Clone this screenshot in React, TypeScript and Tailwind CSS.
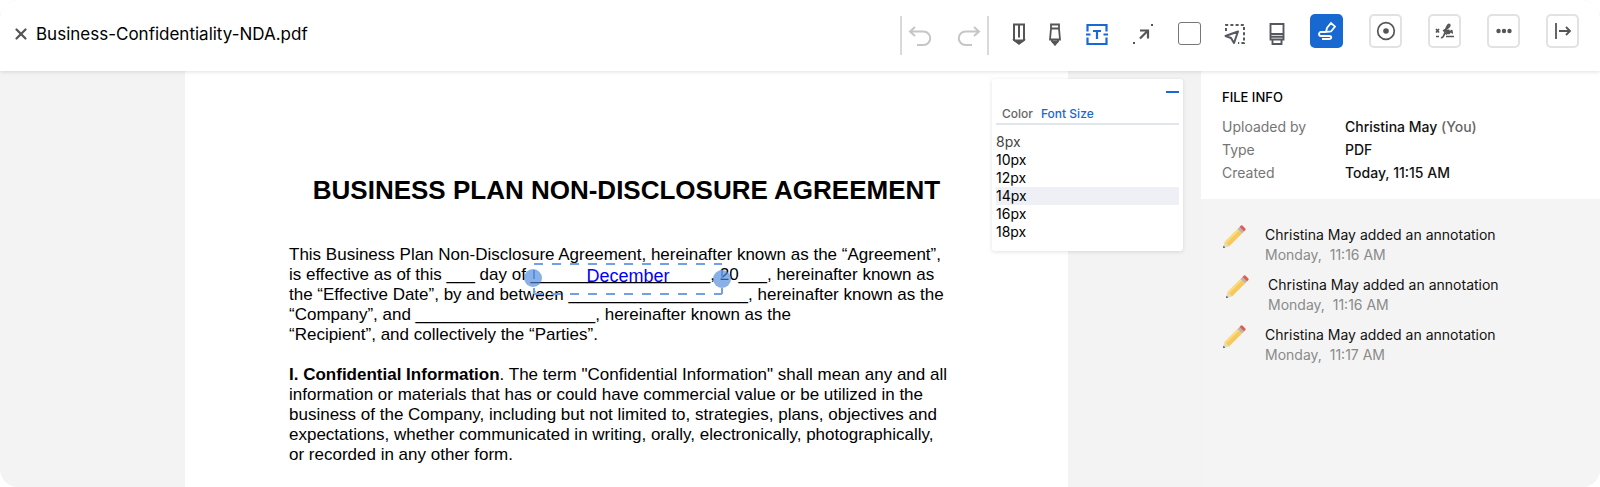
import { X } from 'lucide-react'
import type { ReactNode } from 'react'

const fontSizes = [8, 10, 12, 14, 16, 18]

const annotations = [
  { author: 'Christina May', time: '11:16 AM', indent: false },
  { author: 'Christina May', time: '11:16 AM', indent: true },
  { author: 'Christina May', time: '11:17 AM', indent: false },
]

function ToolButton({ label, children }: { label: string; children: ReactNode }) {
  return (
    <button aria-label={label} className="flex h-6 w-6 items-center justify-center">
      {children}
    </button>
  )
}

function FrameButton({
  label,
  active,
  children,
}: {
  label: string
  active?: boolean
  children: ReactNode
}) {
  return (
    <button
      aria-label={label}
      className={`flex h-[34px] w-[33px] items-center justify-center rounded-[5px] ${active ? 'bg-[#1868d1] text-white' : 'border-2 border-[#e2e2e2] text-[#555555]'}`}
    >
      {children}
    </button>
  )
}

function UndoIcon() {
  return (
    <svg width="24" height="24" viewBox="0 0 24 24" fill="none" stroke="#c6c6c6" strokeWidth="2">
      <path d="M7 3 2 7.500l5 4.500M2 7.500h13.500a6.500 6.500 0 0 1 0 13.500H9" />
    </svg>
  )
}

function RedoIcon() {
  return (
    <svg width="24" height="24" viewBox="0 0 24 24" fill="none" stroke="#c6c6c6" strokeWidth="2">
      <path d="m17 3 5 4.500-5 4.500M22 7.500H8.500a6.500 6.500 0 0 0 0 13.500H15" />
    </svg>
  )
}

function PenIcon() {
  return (
    <svg width="14" height="22" viewBox="0 0 14 22" fill="none" stroke="#555" strokeWidth="2">
      <path d="M2 1.500h10v15.500l-5 3.500-5-3.500zM7 1.500v13" />
      <path d="m3 17.500 4 3 4-3z" fill="#555" />
    </svg>
  )
}

function HighlighterIcon() {
  return (
    <svg width="14" height="24" viewBox="0 0 14 24" fill="none" stroke="#555" strokeWidth="1.800">
      <path d="M3 2.500h8v4H3zM3 6.500 2 17.500h10L11 6.500M4 17.500v2l3 3 3-3v-2" />
      <path d="m5 19.500 2 3 2-3z" fill="#555" />
    </svg>
  )
}

function TextIcon() {
  return (
    <svg width="24" height="24" viewBox="0 0 24 24" fill="none" stroke="#1868d8" strokeWidth="2.200">
      <path d="M2.500 9.500V3h19v6.500M2.500 15.500V22h19v-6.500M1 12.500h4.500M18.500 12.500H23M8 9h8M12 9v8" />
    </svg>
  )
}

function ArrowIcon() {
  return (
    <svg width="22" height="22" viewBox="0 0 22 22" fill="none" stroke="#555" strokeWidth="2.200">
      <path d="M8 7.500h8v8M16 7.500l-8 8" />
      <path d="M1 20h2M19 2h2" strokeWidth="2" />
    </svg>
  )
}

function SelectIcon() {
  return (
    <svg width="22" height="22" viewBox="0 0 22 22" fill="none" stroke="#55585f" strokeWidth="2">
      <path d="M2 8V2h18v18h-6" strokeDasharray="3 2.200" />
      <path d="M14 8.500 1.500 13l5.500 2 3 5z" strokeLinejoin="round" />
    </svg>
  )
}

function EraserIcon() {
  return (
    <svg width="16" height="24" viewBox="0 0 16 24" fill="none" stroke="#55585f" strokeWidth="1.900">
      <path d="M1.500 2h13v15.500h-13zM1.500 12h13M1.500 14.800h13M3.500 17.500h9v4.500h-9z" />
    </svg>
  )
}

function SignIcon() {
  return (
    <svg width="20" height="20" viewBox="0 0 20 20" fill="none" stroke="currentColor" strokeWidth="1.800">
      <path d="m9 11 1-4 4-5 4 3.500-4 5zM10 11H4a2 2 0 0 0 0 4h8c3 0 3 3 0 3H5" />
    </svg>
  )
}

function TargetIcon() {
  return (
    <svg width="20" height="20" viewBox="0 0 20 20" fill="none" stroke="currentColor" strokeWidth="1.700">
      <circle cx="10" cy="10" r="8.300" />
      <circle cx="10" cy="10" r="2.800" fill="currentColor" stroke="none" />
    </svg>
  )
}

function SignatureIcon() {
  return (
    <svg width="20" height="18" viewBox="0 0 20 18" fill="none" stroke="currentColor" strokeWidth="1.700">
      <path d="m1 7 3 3.500M4 7l-3 3.500M1 14.500h3M11 14.500h8" />
      <path d="M6 15.500c2 1 3.500-3 4.500-7s3-7 4-6-1 4-6.500 6.500M9 9.500l4-1-2 4 3.500-4-1 3.500 3-3.500c1 0-.5 2.500 1.500 2.500" />
    </svg>
  )
}

function MoreIcon() {
  return (
    <svg width="16" height="6" viewBox="0 0 16 6" fill="currentColor">
      <circle cx="2.500" cy="3" r="2.200" />
      <circle cx="8" cy="3" r="2.200" />
      <circle cx="13.500" cy="3" r="2.200" />
    </svg>
  )
}

function CollapseIcon() {
  return (
    <svg width="18" height="18" viewBox="0 0 18 18" fill="none" stroke="currentColor" strokeWidth="1.800">
      <path d="M2 1v16M5 9h11M12 5l4 4-4 4" />
    </svg>
  )
}

function PencilIcon() {
  return (
    <svg width="24" height="24" viewBox="0 0 24 24">
      <path d="m1 23 1.500-6 4.500 4.500z" fill="#e3dcbc" />
      <path d="m1 23 .6-2.300 1.700 1.700z" fill="#4a4a4a" />
      <path d="M2.500 17 15.500 4l4.500 4.500L7 21.500z" fill="#f7c95c" />
      <path d="m2.500 17 13-13 1.500 1.500-13 13z" fill="#fbdc85" />
      <path d="m15.500 4 2-2L22 6.500l-2 2z" fill="#b9b6b2" />
      <path d="M17.500 2 19 .6q.7-.5 1.400 0l3 3q.6.700 0 1.400L22 6.500z" fill="#de5f50" />
    </svg>
  )
}

function Header() {
  return (
    <header className="relative z-10 flex h-[71px] shrink-0 items-center justify-between bg-white pr-[21px] pb-1 pl-3 shadow-[0_1px_4px_rgba(0,0,0,0.12)]">
      <div className="flex items-center gap-1.5">
        <button aria-label="Close" className="text-[#555555]">
          <X size={18} strokeWidth={3} />
        </button>
        <h1 className="text-[17px] leading-6 text-black">Business-Confidentiality-NDA.pdf</h1>
      </div>
      <div className="flex items-center">
        <div className="mt-1 flex h-[39px] w-[89px] items-center justify-between border-x-2 border-[#d9d9d9] px-1.5">
          <ToolButton label="Undo">
            <UndoIcon />
          </ToolButton>
          <ToolButton label="Redo">
            <RedoIcon />
          </ToolButton>
        </div>
        <div className="mr-[21px] ml-[18px] flex items-center gap-[18px]">
          <div className="flex items-center gap-3">
            <ToolButton label="Pen">
              <PenIcon />
            </ToolButton>
            <ToolButton label="Highlighter">
              <HighlighterIcon />
            </ToolButton>
          </div>
          <div className="flex items-center gap-[22px]">
            <ToolButton label="Text">
              <TextIcon />
            </ToolButton>
            <ToolButton label="Arrow">
              <ArrowIcon />
            </ToolButton>
            <ToolButton label="Rectangle">
              <span className="h-[23px] w-[23px] rounded-[3px] border border-[#777777]" />
            </ToolButton>
            <ToolButton label="Select">
              <SelectIcon />
            </ToolButton>
          </div>
          <ToolButton label="Eraser">
            <EraserIcon />
          </ToolButton>
        </div>
        <div className="mb-1.5 flex items-center gap-[26px]">
          <FrameButton label="Sign" active>
            <SignIcon />
          </FrameButton>
          <FrameButton label="Stamp">
            <TargetIcon />
          </FrameButton>
          <FrameButton label="Signature">
            <SignatureIcon />
          </FrameButton>
          <FrameButton label="More">
            <MoreIcon />
          </FrameButton>
          <FrameButton label="Collapse panel">
            <CollapseIcon />
          </FrameButton>
        </div>
      </div>
    </header>
  )
}

function TextAnnotation() {
  return (
    <div className="absolute top-[192px] left-[348px] flex h-8 w-[190px] items-center justify-center">
      <svg className="absolute inset-0 h-full w-full" fill="none" stroke="#6fa0e8" strokeWidth="2">
        <path d="M1 1h188M1 31h188" strokeDasharray="9 9" />
        <path d="M1 7v24M189 7v24" strokeDasharray="9 9" />
      </svg>
      <span className="absolute top-1.5 -left-[9px] h-[18px] w-[18px] rounded-full bg-[#4b86dc]/65" />
      <span className="absolute top-[7px] -right-2 h-[18px] w-[18px] rounded-full bg-[#4b86dc]/65" />
      <span className="pb-1.5 text-[18px] leading-5 text-[#0000ff]">December</span>
    </div>
  )
}

function Document() {
  return (
    <article className="relative mr-[133px] ml-[185px] h-full flex-1 overflow-hidden bg-white px-[104px] pt-[103px] font-['Liberation_Sans',Arial,sans-serif] text-[17px] leading-5 text-black">
      <h2 className="text-center text-[26px] leading-8 font-bold whitespace-nowrap">
        BUSINESS PLAN NON-DISCLOSURE AGREEMENT
      </h2>
      <p className="mt-[39px] whitespace-nowrap">
        This Business Plan Non-Disclosure Agreement, hereinafter known as the “Agreement”,
        <br />
        is effective as of this ___ day of ___________________, 20___, hereinafter known as
        <br />
        the “Effective Date”, by and between ___________________, hereinafter known as the
        <br />
        “Company”, and ___________________, hereinafter known as the
        <br />
        “Recipient”, and collectively the “Parties”.
      </p>
      <p className="mt-5 whitespace-nowrap">
        <b>I. Confidential Information</b>. The term "Confidential Information" shall mean any and all
        <br />
        information or materials that has or could have commercial value or be utilized in the
        <br />
        business of the Company, including but not limited to, strategies, plans, objectives and
        <br />
        expectations, whether communicated in writing, orally, electronically, photographically,
        <br />
        or recorded in any other form.
      </p>
      <TextAnnotation />
    </article>
  )
}

function FontPanel() {
  return (
    <section className="absolute top-2 right-[18px] w-[191px] rounded-[3px] bg-white px-1 pb-2.5 shadow-[0_1px_4px_rgba(0,0,0,0.12)]">
      <div className="flex h-[26px] items-center justify-end">
        <button aria-label="Minimize" className="h-[2px] w-[13px] bg-[#1868d8]" />
      </div>
      <div className="flex h-5 gap-2 border-b-2 border-[#e1e6ea] pl-1.5 text-[12px] leading-[18px] font-medium">
        <button className="text-[#666666]">Color</button>
        <button className="text-[#1868d1]">Font Size</button>
      </div>
      <ul className="mt-2 text-[14px] leading-[18px] text-black">
        {fontSizes.map((size) => (
          <li key={size}>
            <button
              className={`block w-full text-left ${size === 14 ? 'bg-[#eff0f5]' : ''} ${size === 8 ? 'text-[#444444]' : ''}`}
            >
              {size}px
            </button>
          </li>
        ))}
      </ul>
    </section>
  )
}

function Sidebar() {
  return (
    <aside className="w-[399px] shrink-0 bg-[#f4f4f4] text-[14px]">
      <section className="bg-white px-[21px] pt-4 pb-[15px]">
        <h2 className="text-[13px] leading-5 font-medium text-black">FILE INFO</h2>
        <dl className="mt-2 grid grid-cols-[123px_1fr] leading-[23px]">
          <dt className="text-[#757575]">Uploaded by</dt>
          <dd className="font-medium">
            Christina May <span className="text-[#666666]">(You)</span>
          </dd>
          <dt className="text-[#757575]">Type</dt>
          <dd className="font-medium">PDF</dd>
          <dt className="text-[#757575]">Created</dt>
          <dd className="font-medium">Today, 11:15 AM</dd>
        </dl>
      </section>
      <ul className="flex flex-col gap-2.5 px-[21px] pt-[26px]">
        {annotations.map((item, i) => (
          <li key={i} className={`flex gap-[19px] ${item.indent ? 'pl-[3px]' : ''}`}>
            <PencilIcon />
            <div className="leading-5">
              <p>{item.author} added an annotation</p>
              <p className="text-[#8a8a8a]">Monday, &nbsp;{item.time}</p>
            </div>
          </li>
        ))}
      </ul>
    </aside>
  )
}

export default function App() {
  return (
    <div className="flex h-screen flex-col overflow-hidden rounded-[18px] bg-[#f3f3f3] font-[Inter,sans-serif] text-[#111111]">
      <Header />
      <div className="flex min-h-0 flex-1">
        <main className="relative flex min-w-0 flex-1">
          <Document />
          <FontPanel />
        </main>
        <Sidebar />
      </div>
    </div>
  )
}
